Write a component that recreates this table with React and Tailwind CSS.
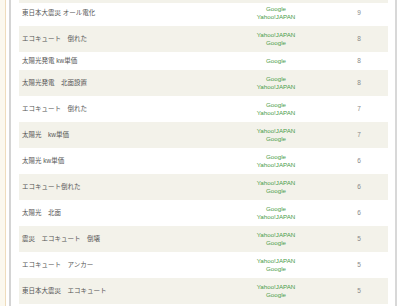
import React from "react";

const rows = [
  ["東日本大震災 オール電化", ["Google", "Yahoo!JAPAN"], 9],
  ["エコキュート　倒れた", ["Yahoo!JAPAN", "Google"], 8],
  ["太陽光発電 kw単価", ["Google"], 8],
  ["太陽光発電　北面設置", ["Google", "Yahoo!JAPAN"], 8],
  ["エコキュート　倒れた", ["Google", "Yahoo!JAPAN"], 7],
  ["太陽光　kw単価", ["Yahoo!JAPAN", "Google"], 7],
  ["太陽光 kw単価", ["Google", "Yahoo!JAPAN"], 6],
  ["エコキュート倒れた", ["Yahoo!JAPAN", "Google"], 6],
  ["太陽光　北面", ["Google", "Yahoo!JAPAN"], 6],
  ["震災　エコキュート　倒壊", ["Yahoo!JAPAN", "Google"], 5],
  ["エコキュート　アンカー", ["Yahoo!JAPAN", "Google"], 5],
  ["東日本大震災　エコキュート", ["Yahoo!JAPAN", "Google"], 5],
];

export default function App() {
  return (
    <div
      className="flex h-[306px] w-[400px] overflow-hidden bg-white"
      style={{ fontFamily: '"Liberation Sans", "Noto Sans CJK JP", sans-serif' }}
    >
      <div className="w-[5px] shrink-0 bg-[#fbf8ee]" />
      <div className="w-[1px] shrink-0 bg-[#efdcbc]" />
      <div className="w-[3px] shrink-0 bg-white" />
      <div className="w-[2px] shrink-0 bg-[#d4d4d4]" />
      <div className="w-[8px] shrink-0 bg-white" />
      <div className="flex w-[369px] shrink-0 flex-col">
        <div className="h-[3px] bg-[#f3f2ea]" />
        {rows.map(([kw, links, n], i) => (
          <div
            key={i}
            className={`grid grid-cols-[207px_100px_62px] items-center ${
              i % 2 === 1 ? "bg-[#f3f2ea]" : "bg-white"
            } ${i === 0 ? "pt-[2px] pb-[5px]" : "py-[5px]"}`}
          >
            <div className="pl-[3px] text-[6.5px] leading-[8px] text-[#555]">{kw}</div>
            <div className="flex flex-col items-center text-[6.2px] leading-[8px] text-[#4a9d4a]">
              {links.map((l, j) => (
                <span key={j}>{l}</span>
              ))}
            </div>
            <div className="pl-[4px] text-center text-[6.5px] leading-[8px] text-[#888]">{n}</div>
          </div>
        ))}
      </div>
      <div className="w-[7px] shrink-0 bg-white" />
      <div className="w-[2px] shrink-0 bg-[#d8d8d8]" />
      <div className="flex-1 bg-white" />
    </div>
  );
}
